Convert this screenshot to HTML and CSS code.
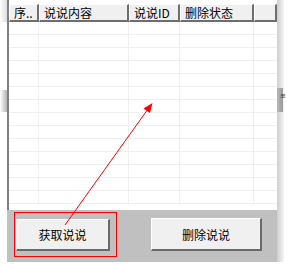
FILE: index.html
```html
<!DOCTYPE html>
<html lang="zh-CN">
<head>
    <meta charset="UTF-8">
    <title>说说管理</title>
    <link rel="stylesheet" href="styles.css">
</head>
<body>

<div class="window">
    <div class="edge edge-left"></div>

    <div class="main">
        <div class="listview">
            <div class="header">
                <div class="col c1">序..</div>
                <div class="col c2">说说内容</div>
                <div class="col c3">说说ID</div>
                <div class="col c4">删除状态</div>
                <div class="col c5"></div>
            </div>
            <div class="rows" id="rows"></div>
        </div>

        <div class="panel">
            <button class="btn btn-get">获取说说</button>
            <button class="btn btn-del">删除说说</button>
        </div>
    </div>

    <div class="edge edge-right"><span class="grip">≡</span></div>

    <svg class="marks" width="287" height="265" viewBox="0 0 287 265">
        <rect x="14.5" y="212.5" width="102" height="44" fill="none" stroke="#ff0000" stroke-width="1"/>
        <line x1="65" y1="225" x2="148" y2="109" stroke="#ff0000" stroke-width="1"/>
        <polygon points="152.5,103 150,113 143.5,108.5" fill="#ff0000"/>
    </svg>
</div>

<script>
    const rows = document.getElementById('rows');
    for (let i = 0; i < 14; i++) {
        rows.innerHTML += `<div class="row">
            <div class="cell c1"></div><div class="cell c2"></div><div class="cell c3"></div><div class="cell c4"></div><div class="cell c5"></div>
        </div>`;
    }
</script>

</body>
</html>
```

FILE: styles.css
```css
body {
    margin: 0;
    background: #ffffff;
    font-family: "Noto Sans CJK SC", "DejaVu Sans", sans-serif;
    font-size: 12px;
    color: #000;
}
.window {
    position: relative;
    width: 287px;
    height: 265px;
    display: flex;
    overflow: hidden;
}
.edge {
    height: 262px;
}
.edge-left {
    width: 7px;
    background:
        linear-gradient(to right, rgba(255,255,255,0), rgba(160,160,160,0.35)) 0 0 / 7px 22px no-repeat,
        linear-gradient(to right, rgba(255,255,255,0), rgba(130,130,130,0.6)) 0 90px / 7px 22px no-repeat;
}
.edge-right {
    width: 10px;
    position: relative;
    background:
        linear-gradient(to right, #cfcfcf, #f4f4f4) 0 0 / 7px 262px no-repeat;
}
.edge-right::before {
    content: "";
    position: absolute;
    left: 0;
    top: 88px;
    width: 6px;
    height: 24px;
    background: linear-gradient(to right, #b8b8b8, #9a9a9a);
}
.grip {
    position: absolute;
    left: 3px;
    top: 93px;
    font-family: "DejaVu Sans", sans-serif;
    font-size: 7px;
    line-height: 7px;
    color: #333;
}
.main {
    width: 270px;
    display: flex;
    flex-direction: column;
}
.listview {
    height: 210px;
    border-left: 2px solid #808080;
    box-sizing: border-box;
    padding-top: 4px;
    background: #fff;
    overflow: hidden;
}
.header {
    display: flex;
    height: 18px;
}
.col {
    box-sizing: border-box;
    height: 18px;
    background: #f0f0f0;
    border-top: 1px solid #ffffff;
    border-left: 1px solid #ffffff;
    border-right: 2px solid #6e6e6e;
    border-bottom: 2px solid #6e6e6e;
    padding-left: 4px;
    line-height: 15px;
    white-space: nowrap;
    overflow: hidden;
}
.c1 { width: 30px; }
.c2 { width: 90px; }
.c3 { width: 51px; }
.c4 { width: 74px; }
.c5 { width: 23px; }
.rows {
    display: flex;
    flex-direction: column;
}
.row {
    display: flex;
    height: 13px;
    border-bottom: 1px solid #efefef;
    box-sizing: border-box;
}
.cell {
    box-sizing: border-box;
    height: 12px;
    border-right: 1px solid #efefef;
}
.cell.c5 { border-right: none; }
.panel {
    height: 52px;
    background: #c0c0c0;
    display: flex;
    align-items: flex-start;
    padding: 8px 0 0 9px;
    box-sizing: border-box;
    gap: 41px;
}
.btn {
    font-family: "Noto Sans CJK SC", "DejaVu Sans", sans-serif;
    font-size: 12px;
    color: #000;
    background: #f0f0f0;
    border-top: 1px solid #ffffff;
    border-left: 1px solid #ffffff;
    border-right: 2px solid #696969;
    border-bottom: 2px solid #696969;
    padding: 0;
    box-sizing: border-box;
    cursor: pointer;
}
.btn-get {
    width: 94px;
    height: 32px;
    margin-top: 1px;
}
.btn-del {
    width: 111px;
    height: 33px;
}
.marks {
    position: absolute;
    left: 0;
    top: 0;
    pointer-events: none;
}
```
